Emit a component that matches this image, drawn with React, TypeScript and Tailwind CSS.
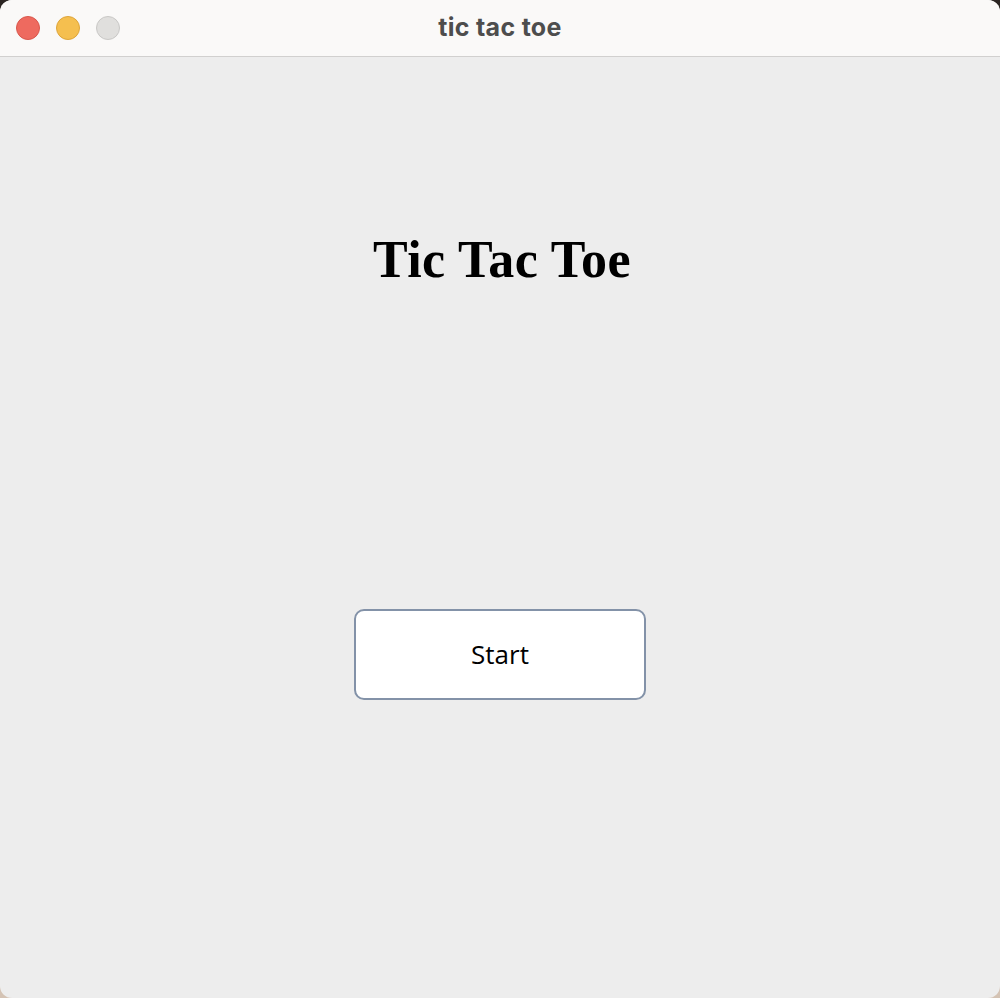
import React from 'react';

const TrafficLight: React.FC<{ color: string }> = ({ color }) => (
  <span className={`block w-6 h-6 rounded-full border ${color}`} />
);

const App: React.FC = () => {
  return (
    <div className="w-[1000px] h-[998px] bg-[linear-gradient(to_bottom,#2b2522_0%,#2b2522_50%,#d4c3b4_50%,#d4c3b4_100%)]">
      <div className="w-full h-full rounded-[12px] overflow-hidden flex flex-col bg-[#ededed]">
        <div className="relative h-[57px] shrink-0 bg-[#faf9f8] border-b border-[#d1d0cf] flex items-center justify-center">
          <div className="absolute left-4 top-4 flex gap-4">
            <TrafficLight color="bg-[#ee6a5f] border-[#d9574c]" />
            <TrafficLight color="bg-[#f5bf4f] border-[#dea53a]" />
            <TrafficLight color="bg-[#e0dfdd] border-[#c9c8c6]" />
          </div>
          <span className="text-[25px] font-bold text-[#4d4d4d] font-['Inter','Liberation_Sans',sans-serif] tracking-[0.3px]">
            tic tac toe
          </span>
        </div>

        <main className="flex-1 flex flex-col items-center">
          <h1 className="mt-[177px] pl-[4px] text-[52px] leading-none font-bold text-black font-['Liberation_Serif',serif] tracking-[0.4px]">
            Tic Tac Toe
          </h1>
          <button className="mt-[323px] w-[292px] h-[91px] bg-white border-2 border-[#8392a8] rounded-[10px] text-[26px] text-black font-['Open_Sans','Liberation_Sans',sans-serif]">
            Start
          </button>
        </main>
      </div>
    </div>
  );
};

export default App;
